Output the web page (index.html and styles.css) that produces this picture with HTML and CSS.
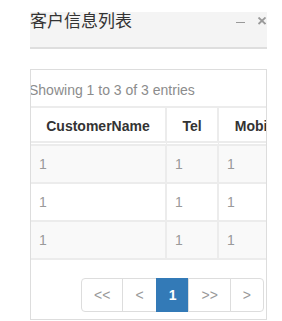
FILE: index.html
```html
<!DOCTYPE html>
<html>
<head>
	<title>客户信息列表</title>
	<link rel="stylesheet" href="styles.css">
</head>
<body>
<div class="panel">
	<div class="panel-heading">
		<div class="panel-title">客户信息列表</div>
		<svg class="tools" width="30" height="8" viewBox="0 0 30 8">
			<line x1="0" y1="5.5" x2="9" y2="5.5" stroke="#999" stroke-width="1"/>
			<line x1="22.5" y1="0.5" x2="29.5" y2="7" stroke="#9a9a9a" stroke-width="1.8"/>
			<line x1="29.5" y1="0.5" x2="22.5" y2="7" stroke="#9a9a9a" stroke-width="1.8"/>
		</svg>
	</div>
	<div class="panel-body">
		<div class="info">Showing 1 to 3 of 3 entries</div>
		<table class="grid">
			<thead>
				<tr>
					<th class="c1">CustomerName</th>
					<th class="c2">Tel</th>
					<th class="c3">Mobile</th>
				</tr>
			</thead>
			<tbody>
				<tr class="odd">
					<td>1</td>
					<td>1</td>
					<td>1</td>
				</tr>
				<tr>
					<td>1</td>
					<td>1</td>
					<td>1</td>
				</tr>
				<tr class="odd">
					<td>1</td>
					<td>1</td>
					<td>1</td>
				</tr>
			</tbody>
		</table>
		<div class="pager">
			<ul class="pagination">
				<li><a>&lt;&lt;</a></li>
				<li><a>&lt;</a></li>
				<li class="active"><a>1</a></li>
				<li><a>&gt;&gt;</a></li>
				<li><a>&gt;</a></li>
			</ul>
		</div>
	</div>
</div>
</body>
</html>
```

FILE: styles.css
```css
body{
	margin: 0;
	background-color: #fff;
	font-family: "Liberation Sans", Arial, sans-serif;
	font-size: 14px;
	color: #333;
}
.panel{
	width: 237px;
	margin-left: 30px;
}
.panel-heading{
	display: flex;
	justify-content: space-between;
	align-items: flex-start;
	margin-top: 12px;
	height: 35px;
	background-color: #f4f4f4;
	border-bottom: 2px solid #dedede;
}
.panel-title{
	margin-top: -1px;
	font-family: "Noto Sans CJK SC", sans-serif;
	font-size: 17px;
	line-height: 17px;
	color: #333;
}
.tools{
	display: block;
	margin-top: 5px;
	margin-right: 1px;
}
.panel-body{
	margin-top: 20px;
	border: 1px solid #ddd;
	overflow: hidden;
}
.info{
	padding-top: 10px;
	margin-bottom: 6px;
	margin-left: -2px;
	line-height: 20px;
	color: #8c8c8c;
}
.grid{
	table-layout: fixed;
	width: 266px;
	border-collapse: separate;
	border-spacing: 0;
}
.grid th, .grid td{
	box-sizing: border-box;
	line-height: 20px;
	border-right: 2px solid #ececec;
}
.grid th{
	padding: 8px 0 5px;
	text-align: center;
	font-weight: bold;
	color: #333;
	border-top: 2px solid #ececec;
	border-bottom: 5px double #ececec;
}
.grid .c1{
	width: 136px;
}
.grid .c2{
	width: 52px;
}
.grid .c3{
	width: 78px;
}
.grid td{
	padding: 8px;
	color: #9a9a9a;
	border-bottom: 2px solid #ececec;
}
.grid tr.odd td{
	background-color: #f9f9f9;
}
.pager{
	display: flex;
	justify-content: flex-end;
	margin: 18px 2px 7px 0;
}
.pagination{
	display: flex;
	margin: 0;
	padding: 0;
	list-style: none;
}
.pagination li a{
	display: block;
	padding: 6px 12px;
	margin-left: -1px;
	line-height: 20px;
	color: #999;
	background-color: #fff;
	border: 1px solid #ddd;
}
.pagination li:first-child a{
	margin-left: 0;
	border-radius: 4px 0 0 4px;
}
.pagination li:last-child a{
	border-radius: 0 4px 4px 0;
}
.pagination li.active a{
	color: #fff;
	font-weight: bold;
	background-color: #337ab7;
	border-color: #337ab7;
}
```
